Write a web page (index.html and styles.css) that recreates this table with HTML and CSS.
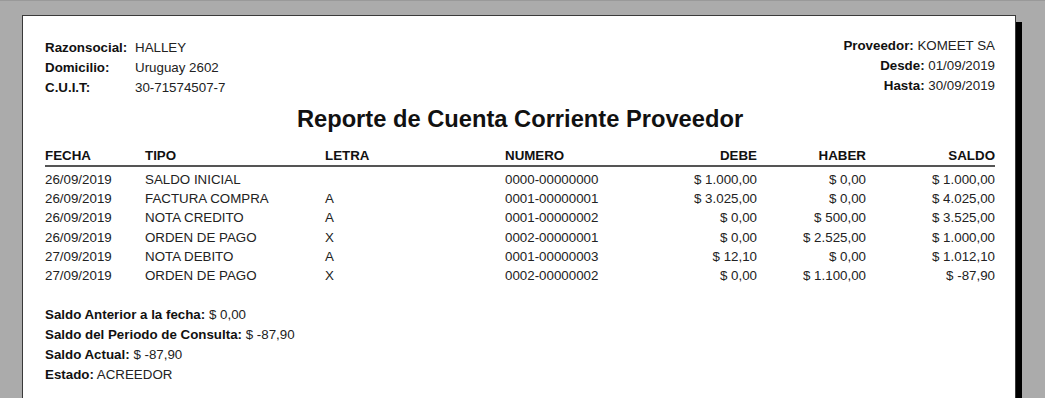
FILE: index.html
```html
<!DOCTYPE html>
<html lang="es">
<head>
<meta charset="utf-8">
<title>Reporte de Cuenta Corriente Proveedor</title>
<link rel="stylesheet" href="styles.css">
</head>
<body>
<div class="page">
  <div class="head">
    <div class="company">
      <span class="lbl">Razonsocial:</span><span class="val">HALLEY</span>
      <span class="lbl">Domicilio:</span><span class="val">Uruguay 2602</span>
      <span class="lbl">C.U.I.T:</span><span class="val">30-71574507-7</span>
    </div>
    <div class="period">
      <div><span class="lbl">Proveedor:</span> <span class="val">KOMEET SA</span></div>
      <div><span class="lbl">Desde:</span> <span class="val">01/09/2019</span></div>
      <div><span class="lbl">Hasta:</span> <span class="val">30/09/2019</span></div>
    </div>
  </div>
  <h1 class="title">Reporte de Cuenta Corriente Proveedor</h1>
  <div class="grid">
    <div class="th">FECHA</div><div class="th">TIPO</div><div class="th">LETRA</div><div class="th">NUMERO</div><div class="th r">DEBE</div><div class="th r">HABER</div><div class="th r">SALDO</div>
    <div class="sp"></div>

    <div class="td">26/09/2019</div><div class="td">SALDO INICIAL</div><div class="td"></div><div class="td">0000-00000000</div><div class="td r">$ 1.000,00</div><div class="td r">$ 0,00</div><div class="td r">$ 1.000,00</div>
    <div class="td">26/09/2019</div><div class="td">FACTURA COMPRA</div><div class="td">A</div><div class="td">0001-00000001</div><div class="td r">$ 3.025,00</div><div class="td r">$ 0,00</div><div class="td r">$ 4.025,00</div>
    <div class="td">26/09/2019</div><div class="td">NOTA CREDITO</div><div class="td">A</div><div class="td">0001-00000002</div><div class="td r">$ 0,00</div><div class="td r">$ 500,00</div><div class="td r">$ 3.525,00</div>
    <div class="td">26/09/2019</div><div class="td">ORDEN DE PAGO</div><div class="td">X</div><div class="td">0002-00000001</div><div class="td r">$ 0,00</div><div class="td r">$ 2.525,00</div><div class="td r">$ 1.000,00</div>
    <div class="td">27/09/2019</div><div class="td">NOTA DEBITO</div><div class="td">A</div><div class="td">0001-00000003</div><div class="td r">$ 12,10</div><div class="td r">$ 0,00</div><div class="td r">$ 1.012,10</div>
    <div class="td">27/09/2019</div><div class="td">ORDEN DE PAGO</div><div class="td">X</div><div class="td">0002-00000002</div><div class="td r">$ 0,00</div><div class="td r">$ 1.100,00</div><div class="td r">$ -87,90</div>
  </div>
  <div class="summary">
    <div><span class="lbl">Saldo Anterior a la fecha:</span> <span class="val">$ 0,00</span></div>
    <div><span class="lbl">Saldo del Periodo de Consulta:</span> <span class="val">$ -87,90</span></div>
    <div><span class="lbl">Saldo Actual:</span> <span class="val">$ -87,90</span></div>
    <div><span class="lbl">Estado:</span> <span class="val">ACREEDOR</span></div>
  </div>
</div>
</body>
</html>
```
FILE: styles.css
```css
html, body {
  margin: 0;
  padding: 0;
  overflow: hidden;
}
body {
  background: #ababab;
  border-top: 1px solid #999;
  padding: 14px 0 0 22px;
  height: 398px;
  box-sizing: border-box;
  font-family: "Liberation Sans", Arial, sans-serif;
  font-size: 13.33px;
  color: #222;
}
.page {
  box-sizing: border-box;
  width: 994px;
  height: 383px;
  background: #fff;
  border: 1px solid #3a3a3a;
  border-bottom: 0;
  box-shadow: 6px 7px 0 #000;
  padding: 22px 20px 0 22px;
}
.lbl {
  font-weight: bold;
  color: #111;
}
.val {
  color: #222;
}
.head {
  display: flex;
  justify-content: space-between;
  line-height: 20px;
}
.company {
  display: grid;
  grid-template-columns: 90px auto;
}
.period {
  text-align: right;
  margin-top: -2px;
}
.title {
  margin: 7px 0 0;
  font-size: 23.7px;
  line-height: 28px;
  font-weight: bold;
  text-align: center;
  color: #111;
}
.grid {
  margin-top: 14px;
  display: grid;
  grid-template-columns: 100px 180px 180px 150px 102px 109px 129px;
}
.th {
  font-weight: bold;
  color: #111;
  line-height: 18px;
  border-bottom: 2px solid #555;
}
.sp {
  grid-column: 1 / -1;
  height: 3px;
}
.td {
  line-height: 19.2px;
  height: 19.2px;
  white-space: nowrap;
}
.r {
  text-align: right;
}
.summary {
  margin-top: 20px;
  line-height: 20px;
}
```
